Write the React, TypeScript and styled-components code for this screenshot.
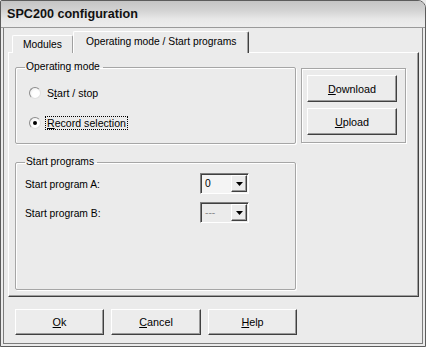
import React from "react";
import styled, { createGlobalStyle } from "styled-components";

const Global = createGlobalStyle`
  html, body { margin: 0; padding: 0; background: #ebebeb; }
  body { font-family: "Liberation Sans", Arial, sans-serif; font-size: 10.3px; color: #000; }
  * { box-sizing: border-box; }
`;

/* ── window frame ───────────────────────────── */
const Window = styled.div`
  width: 426px;
  height: 347px;
  display: flex;
  flex-direction: column;
  background: #ebebeb;
  border: 1px solid #5c5c5c;
  border-top-right-radius: 8px;
  border-top-left-radius: 2px;
  overflow: hidden;
`;

const TitleBar = styled.div`
  height: 27px;
  flex: none;
  display: flex;
  align-items: center;
  padding-left: 6px;
  background: linear-gradient(#c4c4c4 0%, #d2d2d2 35%, #e8e8e8 70%, #ededed 100%);
  border-bottom: 1px solid #9a9a9a;
  font-size: 12.6px;
  font-weight: bold;
  color: #111;
`;

const Body = styled.div`
  flex: 1;
  display: flex;
  flex-direction: column;
  margin: 0 2px 2px 2px;
  padding: 4px 2px 0 4px;
  border: 1px solid #7c7c7c;
  border-top: none;
`;

/* ── tabs ───────────────────────────────────── */
const TabRow = styled.div`
  display: flex;
  align-items: flex-end;
  height: 21px;
  padding-left: 4px;
  position: relative;
  z-index: 1;
  margin-bottom: -1px;
`;

const Tab = styled.div<{ $active?: boolean }>`
  height: ${(p) => (p.$active ? "22px" : "18px")};
  padding: 0 ${(p) => (p.$active ? "12px" : "10px")};
  display: flex;
  align-items: center;
  padding-bottom: ${(p) => (p.$active ? "3px" : "0")};
  background: #ebebeb;
  border-top: 1px solid #fff;
  border-left: 1px solid #fff;
  border-right: 1px solid ${(p) => (p.$active ? "#404040" : "#a0a0a0")};
  box-shadow: ${(p) => (p.$active ? "inset -1px 0 0 #a0a0a0" : "none")};
  border-top-left-radius: 2px;
  border-top-right-radius: 2px;
  white-space: nowrap;
`;

const Panel = styled.div`
  height: 245px;
  margin-right: 1px;
  padding: 8px 0 0 6px;
  border-top: 1px solid #fff;
  border-left: 1px solid #fff;
  border-right: 1px solid #404040;
  border-bottom: 1px solid #404040;
  box-shadow: inset -1px -1px 0 #a0a0a0;
  display: flex;
  flex-direction: column;
`;

const TopRow = styled.div`
  display: flex;
  align-items: flex-start;
`;

/* ── group boxes ────────────────────────────── */
const Group = styled.fieldset<{ $h: number }>`
  margin: 0;
  width: 281px;
  height: ${(p) => p.$h}px;
  padding: 0 0 0 9px;
  border: 1px solid #a6a6a6;
  border-radius: 2px;
  box-shadow: inset 1px 1px 0 #fff, 1px 1px 0 #fff;
  display: flex;
  flex-direction: column;
`;

const Legend = styled.legend`
  margin-left: 0;
  padding: 0 3px 0 1px;
  line-height: 12px;
  height: 12px;
`;

const ActionBox = styled.div`
  margin: 7px 0 0 5px;
  width: 105px;
  height: 75px;
  padding: 6px 0 0 5px;
  border: 1px solid #a6a6a6;
  box-shadow: inset 1px 1px 0 #fff, 1px 1px 0 #fff;
  display: flex;
  flex-direction: column;
  gap: 6px;
`;

/* ── controls ───────────────────────────────── */
const Button = styled.div<{ $w?: number; $h?: number }>`
  width: ${(p) => p.$w ?? 90}px;
  height: ${(p) => p.$h ?? 27}px;
  display: flex;
  align-items: center;
  justify-content: center;
  background: #ececec;
  border-top: 1px solid #fff;
  border-left: 1px solid #fff;
  border-right: 1px solid #404040;
  border-bottom: 1px solid #404040;
  box-shadow: inset -1px -1px 0 #9a9a9a;
  font-size: 10.8px;
`;

const RadioRow = styled.label<{ $top: number }>`
  display: flex;
  align-items: center;
  gap: 5px;
  height: 16px;
  margin-top: ${(p) => p.$top}px;
  padding-left: 4px;
`;

const RadioDot = styled.span<{ $checked?: boolean }>`
  width: 12px;
  height: 12px;
  border-radius: 50%;
  flex: none;
  border: 1px solid #8c8c8c;
  border-right-color: #e0e0e0;
  border-bottom-color: #e0e0e0;
  background: radial-gradient(circle at 60% 60%, #ffffff 40%, #e2e2e2 100%);
  display: flex;
  align-items: center;
  justify-content: center;
  &::after {
    content: "";
    width: 4px;
    height: 4px;
    border-radius: 50%;
    background: ${(p) => (p.$checked ? "#000" : "transparent")};
  }
`;

const RadioText = styled.span<{ $focus?: boolean }>`
  padding: 0 1px;
  line-height: 12px;
  outline: ${(p) => (p.$focus ? "1px dotted #000" : "none")};
  outline-offset: 0;
  font-size: 10.6px;
`;

const FieldRow = styled.div<{ $top: number }>`
  display: flex;
  align-items: center;
  margin-top: ${(p) => p.$top}px;
  height: 21px;
`;

const FieldLabel = styled.span`
  width: 175px;
  padding-top: 2px;
`;

const Combo = styled.div<{ $disabled?: boolean }>`
  width: 49px;
  height: 21px;
  display: flex;
  align-items: center;
  justify-content: space-between;
  padding: 1px 1px 1px 4px;
  background: ${(p) => (p.$disabled ? "#ebebeb" : "#f4f4f4")};
  border-top: 1px solid #808080;
  border-left: 1px solid #808080;
  border-right: 1px solid #fff;
  border-bottom: 1px solid #fff;
  box-shadow: inset 1px 1px 0 #404040;
  color: ${(p) => (p.$disabled ? "#8a8a8a" : "#000")};
`;

const ComboArrow = styled.span`
  width: 16px;
  height: 17px;
  display: flex;
  align-items: center;
  justify-content: center;
  background: #ececec;
  border-top: 1px solid #fff;
  border-left: 1px solid #fff;
  border-right: 1px solid #404040;
  border-bottom: 1px solid #404040;
  box-shadow: inset -1px -1px 0 #9a9a9a;
`;

const ButtonBar = styled.div`
  display: flex;
  gap: 7px;
  margin: 12px 0 0 7px;
`;

const Arrow = () => (
  <svg width="7" height="4" viewBox="0 0 7 4">
    <polygon points="0,0 7,0 3.5,4" fill="#000" />
  </svg>
);

export default function App() {
  return (
    <>
      <Global />
      <Window>
        <TitleBar>SPC200 configuration</TitleBar>
        <Body>
          <TabRow>
            <Tab>Modules</Tab>
            <Tab $active>Operating mode / Start programs</Tab>
          </TabRow>
          <Panel>
            <TopRow>
              <Group $h={83}>
                <Legend>Operating mode</Legend>
                <RadioRow $top={12}>
                  <RadioDot />
                  <RadioText>
                    S<u>t</u>art / stop
                  </RadioText>
                </RadioRow>
                <RadioRow $top={14}>
                  <RadioDot $checked />
                  <RadioText $focus>
                    <u>R</u>ecord selection
                  </RadioText>
                </RadioRow>
              </Group>
              <ActionBox>
                <Button>
                  <span>
                    <u>D</u>ownload
                  </span>
                </Button>
                <Button $h={27}>
                  <span>
                    <u>U</u>pload
                  </span>
                </Button>
              </ActionBox>
            </TopRow>
            <Group $h={134} style={{ marginTop: 12 }}>
              <Legend>Start programs</Legend>
              <FieldRow $top={5}>
                <FieldLabel>Start program A:</FieldLabel>
                <Combo>
                  <span>0</span>
                  <ComboArrow>
                    <Arrow />
                  </ComboArrow>
                </Combo>
              </FieldRow>
              <FieldRow $top={8}>
                <FieldLabel>Start program B:</FieldLabel>
                <Combo $disabled>
                  <span>---</span>
                  <ComboArrow>
                    <Arrow />
                  </ComboArrow>
                </Combo>
              </FieldRow>
            </Group>
          </Panel>
          <ButtonBar>
            <Button $w={89} $h={26}>
              <span>
                <u>O</u>k
              </span>
            </Button>
            <Button $w={90} $h={26}>
              <span>
                <u>C</u>ancel
              </span>
            </Button>
            <Button $w={89} $h={26}>
              <span>
                <u>H</u>elp
              </span>
            </Button>
          </ButtonBar>
        </Body>
      </Window>
    </>
  );
}
